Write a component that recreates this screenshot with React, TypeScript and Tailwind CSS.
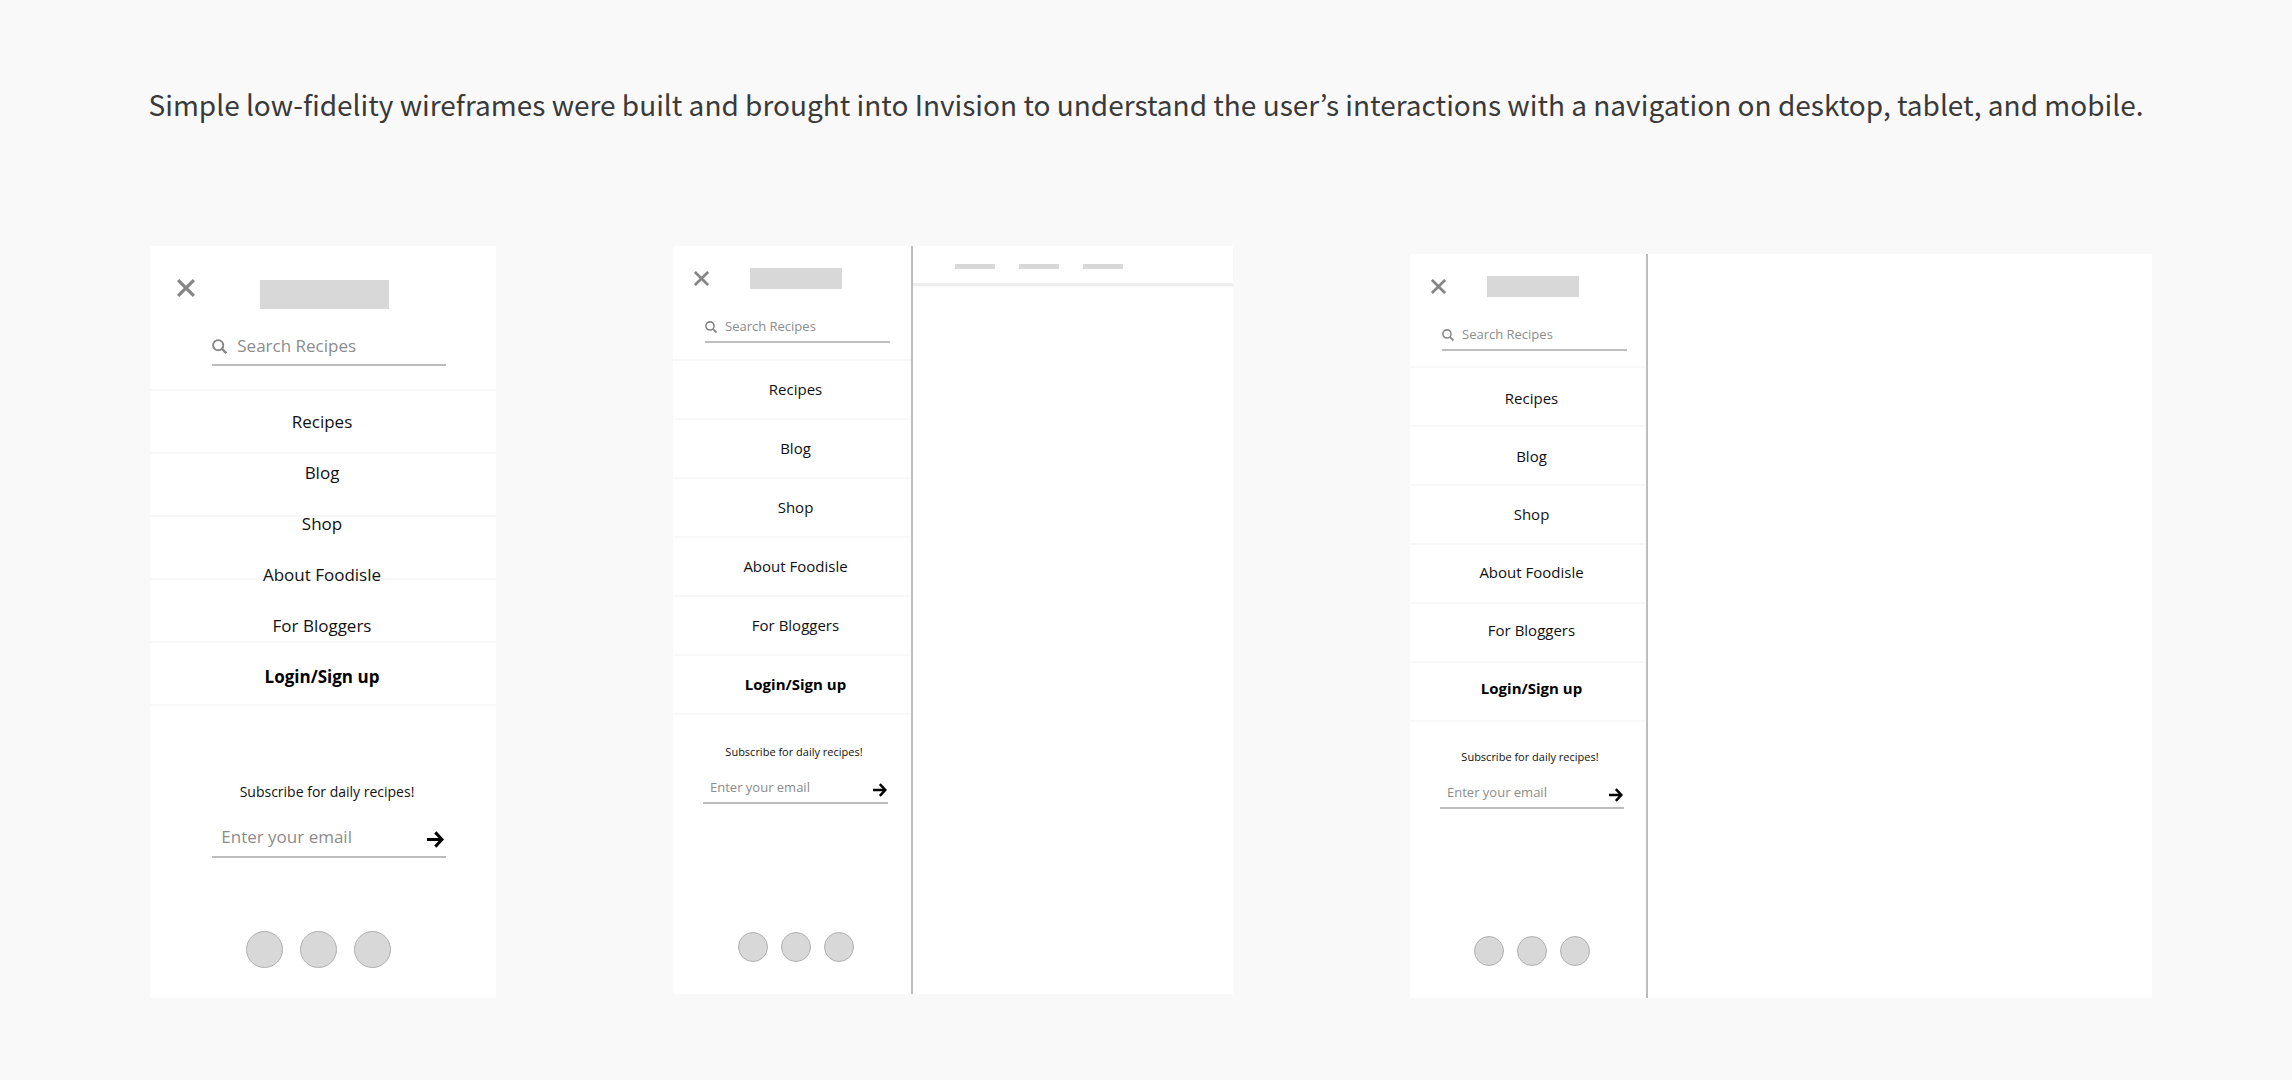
import React, { useId } from "react";

type Variant = {
  header: string;
  close: string;
  logo: string;
  search: string;
  searchIcon: string;
  field: string;
  nav: string;
  row: string;
  menu: string;
  item: string;
  note: string;
  email: string;
  emailPad: string;
  arrow: string;
  dots: string;
  dot: string;
};

const mobile: Variant = {
  header: "items-start pt-[33px] pl-[27px]",
  close: "size-[18px]",
  logo: "mt-px ml-[65px] h-[29px] w-[129px]",
  search: "mt-[19px] ml-[18%] h-[38px] w-[67.5%] gap-[10px]",
  searchIcon: "size-[15px]",
  field: "text-[17px]",
  nav: "mt-[23px]",
  row: "h-[63px]",
  menu: "pt-[7px] pr-[2px]",
  item: "h-[51px] text-[17px]",
  note: "mt-[76px] pl-2 text-[14px] leading-5",
  email: "mt-4 ml-[18%] h-[40px] w-[67.5%]",
  emailPad: "pl-[9px] pr-[2px]",
  arrow: "mt-1 size-[17px]",
  dots: "mt-[73px] gap-[17px] pr-[10px] pb-[30px]",
  dot: "size-[37px]",
};

const tablet: Variant = {
  header: "items-center pt-[22px] pl-[21px]",
  close: "size-[15px]",
  logo: "ml-[41px] h-[21px] w-[92px]",
  search: "mt-[23px] ml-8 h-[31px] w-[185px] gap-2",
  searchIcon: "size-[12px]",
  field: "text-[13px]",
  nav: "mt-4",
  row: "h-[59px]",
  menu: "pt-px pl-[7px]",
  item: "h-[59px] text-[15px]",
  note: "mt-[29px] pl-1 text-[11px] leading-4",
  email: "mt-[14px] ml-[30px] h-[30px] w-[185px]",
  emailPad: "pl-[7px] pr-px",
  arrow: "mt-1 size-[14px]",
  dots: "mt-[128px] gap-[13px] pl-[7px] pb-[32px]",
  dot: "size-[30px]",
};

const desktop: Variant = {
  ...tablet,
  nav: "mt-[15px]",
  menu: "pt-[3px] pl-[7px]",
  item: "h-[58px] text-[15px]",
  note: "mt-[27px] pl-1 text-[11px] leading-4",
  email: "mt-[14px] ml-[30px] h-[30px] w-[184px]",
  dots: "mt-[127px] gap-[13px] pl-[7px] pb-[32px]",
};

const links = ["Recipes", "Blog", "Shop", "About Foodisle", "For Bloggers", "Login/Sign up"];

function Drawer({ v }: { v: Variant }) {
  const searchId = useId();
  const emailId = useId();
  return (
    <div>
      <div className={`flex ${v.header}`}>
        <button type="button" aria-label="Close menu" className="text-[#858585]">
          <svg viewBox="0 0 18 18" className={v.close} fill="none" stroke="currentColor" strokeWidth="3.2">
            <path d="M1.1 1.1 16.9 16.9M16.9 1.1 1.1 16.9" />
          </svg>
        </button>
        <div className={`bg-[#d8d8d8] ${v.logo}`} />
      </div>

      <form className={`flex items-center border-b-2 border-[#bdbdbd] ${v.search}`}>
        <label htmlFor={searchId} aria-label="Search recipes" className="text-[#858585]">
          <svg viewBox="0 0 15 15" className={v.searchIcon} fill="none" stroke="currentColor" strokeWidth="1.9">
            <circle cx="6.2" cy="6.2" r="5.1" />
            <path d="m9.8 9.8 4.5 4.5" strokeWidth="2.3" />
          </svg>
        </label>
        <input
          id={searchId}
          type="text"
          placeholder="Search Recipes"
          className={`min-w-0 flex-1 bg-transparent outline-none placeholder:text-[#8c8c8c] ${v.field}`}
        />
      </form>

      <nav className={`grid ${v.nav}`}>
        <div className="col-start-1 row-start-1 border-b-2 border-[#f8f8f8]">
          {links.slice(v === mobile ? 1 : 0).map((l) => (
            <div key={l} className={`border-t-2 border-[#f8f8f8] ${v.row}`} />
          ))}
        </div>
        <ul className={`col-start-1 row-start-1 ${v.menu}`}>
          {links.map((l) => (
            <li key={l} className={`flex items-center justify-center text-[#111] last:font-bold last:text-black ${v.item}`}>
              <a href="#">{l}</a>
            </li>
          ))}
        </ul>
      </nav>

      <form>
        <label htmlFor={emailId} className={`block text-center text-[#111] ${v.note}`}>
          Subscribe for daily recipes!
        </label>
        <div className={`flex items-center border-b-2 border-[#bdbdbd] ${v.email} ${v.emailPad}`}>
          <input
            id={emailId}
            type="email"
            placeholder="Enter your email"
            className={`min-w-0 flex-1 bg-transparent outline-none placeholder:text-[#8c8c8c] ${v.field}`}
          />
          <button type="button" aria-label="Subscribe" className="text-black">
            <svg viewBox="0 0 17 17" className={v.arrow} fill="none" stroke="currentColor" strokeWidth="3">
              <path d="M0 8.5h14.5M8.3 1.4l6.7 7.1-6.7 7.1" />
            </svg>
          </button>
        </div>
      </form>

      <div className={`flex justify-center ${v.dots}`}>
        {[0, 1, 2].map((i) => (
          <div key={i} className={`rounded-full border border-[#b0b0b0] bg-[#d8d8d8] ${v.dot}`} />
        ))}
      </div>
    </div>
  );
}

export default function App() {
  return (
    <main className="min-h-screen bg-[#f9f9f9] pb-20 font-['Open_Sans',sans-serif]">
      <h1 className="px-6 pt-20 text-center font-['Noto_Sans_CJK_KR',sans-serif] text-[28px] leading-[48px] text-[#3a3a3a]">
        Simple low-fidelity wireframes were built and brought into Invision to understand the user’s interactions with a
        navigation on desktop, tablet, and mobile.
      </h1>

      <div className="mt-[118px] grid grid-cols-[346fr_560fr_742fr] items-start gap-[177px] pr-[140px] pl-[150px]">
        <section className="bg-white">
          <Drawer v={mobile} />
        </section>

        <section className="flex bg-white">
          <div className="w-[240px] shrink-0 border-r-2 border-[#bdbdbd]">
            <Drawer v={tablet} />
          </div>
          <div className="flex-1">
            <div className="flex h-10 gap-6 border-b-3 border-[#eeeeee] pt-[18px] pl-[42px] shadow-[0_1px_2px_rgba(0,0,0,0.04)]">
              <div className="h-[5px] w-10 bg-[#d8d8d8]" />
              <div className="h-[5px] w-10 bg-[#d8d8d8]" />
              <div className="h-[5px] w-10 bg-[#d8d8d8]" />
            </div>
          </div>
        </section>

        <section className="mt-2 flex bg-white">
          <div className="w-[238px] shrink-0 border-r-2 border-[#bdbdbd]">
            <Drawer v={desktop} />
          </div>
        </section>
      </div>
    </main>
  );
}
